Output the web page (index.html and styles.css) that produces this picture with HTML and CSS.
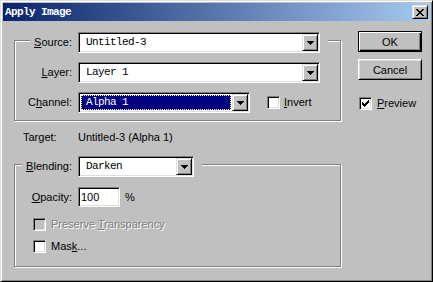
FILE: index.html
```html
<!DOCTYPE html>
<html lang="en">
<head>
  <meta charset="UTF-8">
  <meta name="viewport" content="width=device-width, initial-scale=1.0">
  <title>Apply Image</title>
  <link rel="stylesheet" href="styles.css">
</head>
<body>
  <div class="window">
    <div class="titlebar">
      <span class="title">Apply Image</span>
      <button class="close" aria-label="Close">
        <svg width="8" height="7" viewBox="0 0 8 7" shape-rendering="crispEdges">
          <path d="M0 0h2v1H0zM6 0h2v1H6zM1 1h2v1H1zM5 1h2v1H5zM2 2h4v1H2zM3 3h2v1H3zM2 4h4v1H2zM1 5h2v1H1zM5 5h2v1H5zM0 6h2v1H0zM6 6h2v1H6z" fill="#000"/>
        </svg>
      </button>
    </div>

    <div class="content">
      <div class="main">
        <!-- Source group -->
        <div class="group group-source">
          <div class="row head">
            <div class="lbl"><span><u>S</u>ource:</span></div>
            <div class="cut">
              <div class="combo combo-wide">
                <div class="value mono">Untitled-3</div>
                <div class="drop"><svg width="7" height="4" viewBox="0 0 7 4" shape-rendering="crispEdges"><path d="M0 0h7v1H0zM1 1h5v1H1zM2 2h3v1H2zM3 3h1v1H3z" fill="#000"/></svg></div>
              </div>
            </div>
          </div>
          <div class="row">
            <div class="lbl"><span><u>L</u>ayer:</span></div>
            <div class="combo combo-wide">
              <div class="value mono">Layer 1</div>
              <div class="drop"><svg width="7" height="4" viewBox="0 0 7 4" shape-rendering="crispEdges"><path d="M0 0h7v1H0zM1 1h5v1H1zM2 2h3v1H2zM3 3h1v1H3z" fill="#000"/></svg></div>
            </div>
          </div>
          <div class="row">
            <div class="lbl"><span>C<u>h</u>annel:</span></div>
            <div class="combo combo-channel">
              <div class="value mono selected">Alpha 1</div>
              <div class="drop"><svg width="7" height="4" viewBox="0 0 7 4" shape-rendering="crispEdges"><path d="M0 0h7v1H0zM1 1h5v1H1zM2 2h3v1H2zM3 3h1v1H3z" fill="#000"/></svg></div>
            </div>
            <label class="check check-invert"><span class="box"></span><span><u>I</u>nvert</span></label>
          </div>
        </div>

        <div class="target">
          <span class="target-lbl">Target:</span>
          <span>Untitled-3 (Alpha 1)</span>
        </div>

        <!-- Blending group -->
        <div class="group group-blend">
          <div class="row head">
            <div class="lbl"><span><u>B</u>lending:</span></div>
            <div class="cut">
              <div class="combo combo-blend">
                <div class="value mono">Darken</div>
                <div class="drop"><svg width="7" height="4" viewBox="0 0 7 4" shape-rendering="crispEdges"><path d="M0 0h7v1H0zM1 1h5v1H1zM2 2h3v1H2zM3 3h1v1H3z" fill="#000"/></svg></div>
              </div>
            </div>
          </div>
          <div class="row row-opacity">
            <div class="lbl"><span><u>O</u>pacity:</span></div>
            <input class="num" type="text" value="100">
            <span class="unit">%</span>
          </div>
          <label class="check check-row disabled"><span class="box"></span><span>Preserve <u>T</u>ransparency</span></label>
          <label class="check check-row check-mask"><span class="box"></span><span>Mas<u>k</u>...</span></label>
        </div>
      </div>

      <div class="side">
        <button class="btn btn-default">OK</button>
        <button class="btn btn-cancel">Cancel</button>
        <label class="check check-preview">
          <span class="box">
            <svg width="7" height="7" viewBox="0 0 7 7" shape-rendering="crispEdges"><path d="M6 0h1v1H6zM5 1h2v1H5zM0 2h1v1H0zM4 2h3v1H4zM0 3h2v1H0zM3 3h3v1H3zM0 4h5v1H0zM1 5h3v1H1zM2 6h1v1H2z" fill="#000"/></svg>
          </span>
          <span><u>P</u>review</span>
        </label>
      </div>
    </div>
  </div>
</body>
</html>
```

FILE: styles.css
```css
body {
  margin: 0;
  background: #c0c0c0;
  font-family: "Liberation Sans", Arial, sans-serif;
  font-size: 11px;
  color: #000;
}

.mono {
  font-family: "Liberation Mono", "Courier New", monospace;
  font-size: 11px;
  letter-spacing: -0.6px;
}

/* window frame */
.window {
  width: 433px;
  height: 282px;
  box-sizing: border-box;
  padding: 2px;
  background: #c0c0c0;
  border: 1px solid;
  border-color: #dfdfdf #000 #000 #dfdfdf;
  box-shadow: inset 1px 1px #fff, inset -1px -1px #808080;
}

.titlebar {
  height: 18px;
  display: flex;
  align-items: center;
  justify-content: space-between;
  padding: 0 2px;
  background: linear-gradient(to right, #0a246a, #a6caf0);
}

.title {
  color: #fff;
  font-family: "Liberation Mono", "Courier New", monospace;
  font-weight: bold;
  font-size: 11px;
  letter-spacing: -0.6px;
}

.close {
  width: 16px;
  height: 14px;
  padding: 0;
  display: flex;
  align-items: center;
  justify-content: center;
  background: #c0c0c0;
  border: 1px solid;
  border-color: #dfdfdf #000 #000 #dfdfdf;
  box-shadow: inset 1px 1px #fff, inset -1px -1px #808080;
}

.content {
  display: flex;
}

.main {
  width: 327px;
  padding-left: 11px;
}

.side {
  margin-left: 17px;
  padding-top: 10px;
  width: 64px;
}

/* etched group boxes */
.group {
  width: 327px;
  box-sizing: border-box;
  border: 1px solid #808080;
  box-shadow: inset 1px 1px #fff, 1px 1px #fff;
  margin-top: 19px;
}

.group-source {
  padding-bottom: 7px;
}

.group-blend {
  padding-bottom: 13px;
}

.row {
  display: flex;
  align-items: center;
  height: 21px;
}

.row + .row {
  margin-top: 9px;
}

.row.head {
  margin-top: -9px;
}

.group-blend .row-opacity {
  margin-top: 10px;
  height: 20px;
}

.lbl {
  width: 63px;
  flex: none;
  text-align: right;
}

.lbl span {
  display: inline-block;
  line-height: 21px;
  padding: 0 6px 0 4px;
}

.head .lbl span,
.cut {
  background: #c0c0c0;
}

.cut {
  padding-right: 8px;
}

/* combo boxes */
.combo {
  display: flex;
  height: 21px;
  box-sizing: border-box;
  padding: 1px;
  background: #fff;
  border: 1px solid;
  border-color: #808080 #fff #fff #808080;
  box-shadow: inset 1px 1px #000, inset -1px -1px #dfdfdf;
}

.combo-wide {
  width: 242px;
}

.combo-channel {
  width: 172px;
}

.combo-blend {
  width: 116px;
}

.value {
  flex: 1;
  margin: 1px;
  padding-left: 5px;
  line-height: 15px;
  white-space: nowrap;
}

.value.selected {
  padding-left: 4px;
  background: #000080;
  color: #fff;
  border: 1px dotted #fffbb0;
  line-height: 13px;
}

.drop {
  width: 16px;
  flex: none;
  box-sizing: border-box;
  display: flex;
  align-items: center;
  justify-content: center;
  padding: 1px 0 0 1px;
  background: #c0c0c0;
  border: 1px solid;
  border-color: #dfdfdf #000 #000 #dfdfdf;
  box-shadow: inset 1px 1px #fff, inset -1px -1px #808080;
}

/* checkboxes */
.check {
  display: flex;
  align-items: center;
  gap: 5px;
  line-height: 13px;
}

.box {
  width: 13px;
  height: 13px;
  flex: none;
  box-sizing: border-box;
  display: flex;
  align-items: center;
  justify-content: center;
  background: #fff;
  border: 1px solid;
  border-color: #808080 #fff #fff #808080;
  box-shadow: inset 1px 1px #000, inset -1px -1px #dfdfdf;
}

.check-invert {
  margin-left: 17px;
  gap: 4px;
}

.check-row {
  padding-left: 18px;
  height: 13px;
  margin-top: 11px;
}

.check-mask {
  margin-top: 9px;
}

.disabled {
  color: #808080;
  text-shadow: 1px 1px #fff;
}

.disabled .box {
  background: #c0c0c0;
}

.check-preview {
  margin-top: 17px;
  margin-left: 1px;
}

/* target line */
.target {
  display: flex;
  margin: 8px 0 0 9px;
  line-height: 16px;
}

.target-lbl {
  width: 55px;
}

/* opacity field */
.num {
  width: 42px;
  height: 20px;
  box-sizing: border-box;
  margin: 0;
  padding: 0 0 0 2px;
  font-family: "Liberation Sans", Arial, sans-serif;
  font-size: 11px;
  background: #fff;
  border: 1px solid;
  border-color: #808080 #fff #fff #808080;
  box-shadow: inset 1px 1px #000, inset -1px -1px #dfdfdf;
  outline: none;
}

.unit {
  margin-left: 5px;
}

/* push buttons */
.btn {
  display: block;
  width: 64px;
  height: 21px;
  box-sizing: border-box;
  padding: 0;
  font-family: "Liberation Sans", Arial, sans-serif;
  font-size: 11px;
  color: #000;
  background: #c0c0c0;
  border: 1px solid;
  border-color: #fff #000 #000 #fff;
  box-shadow: inset 1px 1px #dfdfdf, inset -1px -1px #808080;
}

.btn-default {
  border-color: #000;
  box-shadow: inset 1px 1px #fff, inset -1px -1px #000, inset -2px -2px #808080;
}

.btn-cancel {
  margin-top: 7px;
}
```
